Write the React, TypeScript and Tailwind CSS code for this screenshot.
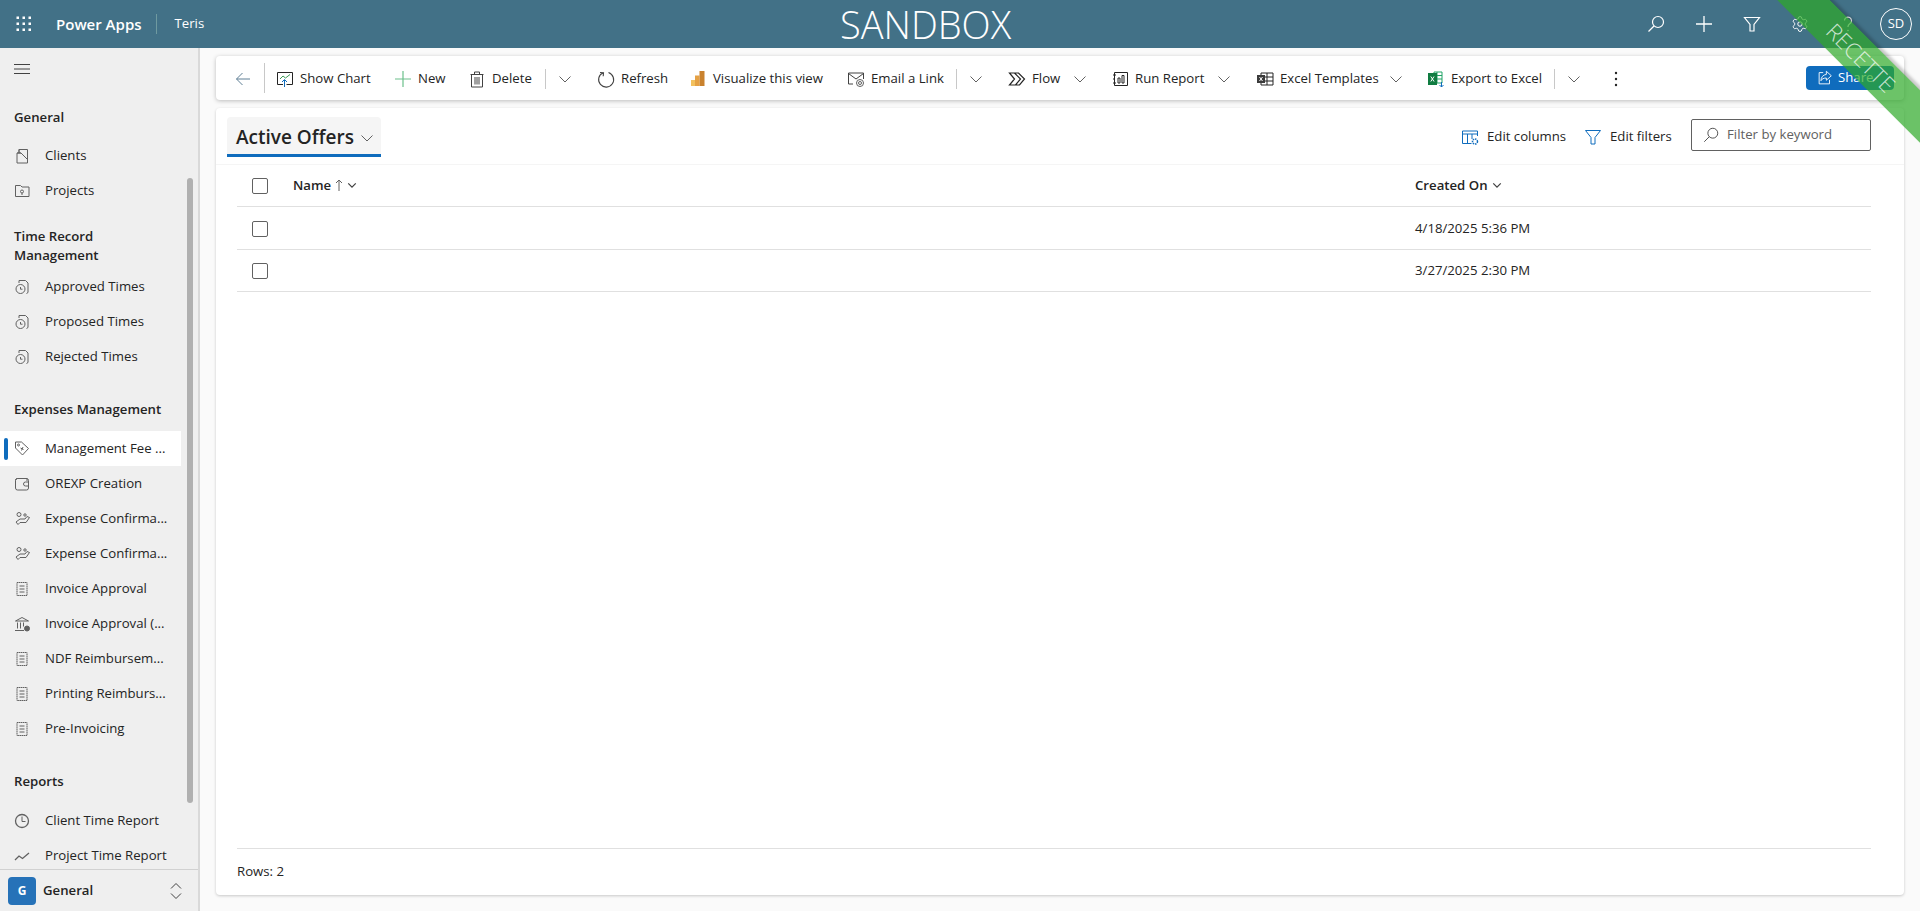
import type { ReactNode } from "react";
import { Settings } from "lucide-react";

function Ico({ children, size = 20, className = "" }: { children: ReactNode; size?: number; className?: string }) {
  return (
    <svg
      width={size}
      height={size}
      viewBox="0 0 20 20"
      fill="none"
      stroke="currentColor"
      strokeWidth="1"
      className={`shrink-0 ${className}`}
    >
      {children}
    </svg>
  );
}

function Chevron({ className = "text-[#616161]" }: { className?: string }) {
  return (
    <svg width="12" height="12" viewBox="0 0 12 12" fill="none" stroke="currentColor" className={`shrink-0 ${className}`}>
      <path d="M0.5 3.5 6 9l5.5-5.5" />
    </svg>
  );
}

const DocIcon = () => (
  <Ico>
    <path d="M5 3.500h10v13H5z" strokeDasharray="1.500 0.400" />
    <path d="M7.500 7h5M7.500 10h5M7.500 13h5" />
  </Ico>
);
const TimeDocIcon = () => (
  <Ico>
    <path d="M7 6V3.500h6.500l2.500 2.500v9.500l-1.500 1" />
    <circle cx="8.500" cy="12" r="4.500" />
    <path d="M8.500 10v2.200h2" />
  </Ico>
);
const HandIcon = () => (
  <Ico>
    <circle cx="7" cy="5.500" r="2" />
    <path d="M4 13l4-3h5l2-2.500 2.500 1-3.500 5h-6l-2 2z" />
    <circle cx="13" cy="6" r="1.200" />
  </Ico>
);

type NavItem = { label: string; icon: ReactNode; active?: boolean };
type Section = { title: ReactNode; className: string; listClass: string; items: NavItem[] };

const sections: Section[] = [
  {
    title: "General",
    className: "pt-[18px]",
    listClass: "mt-[11px]",
    items: [
      {
        label: "Clients",
        icon: (
          <Ico>
            <path d="M5 17V7h2V3.500h8.500V17z" />
            <path d="M7 3.500v3.500h2l6.500 6.500M5 7h4" />
          </Ico>
        ),
      },
      {
        label: "Projects",
        icon: (
          <Ico>
            <path d="M3.500 15.500v-11h5l1.500 1.500h7v9.500z" />
            <circle cx="10" cy="10.500" r="1.500" />
            <path d="M10 12v2" />
          </Ico>
        ),
      },
    ],
  },
  {
    title: (
      <>
        Time Record
        <br />
        Management
      </>
    ),
    className: "pt-[18px]",
    listClass: "mt-[4px]",
    items: [
      { label: "Approved Times", icon: <TimeDocIcon /> },
      { label: "Proposed Times", icon: <TimeDocIcon /> },
      { label: "Rejected Times", icon: <TimeDocIcon /> },
    ],
  },
  {
    title: "Expenses Management",
    className: "pt-[25px]",
    listClass: "mt-[12px]",
    items: [
      {
        label: "Management Fee ...",
        active: true,
        icon: (
          <Ico>
            <path d="M3.500 5V3h6l7 6.500-6 6.500-7-7z" />
            <circle cx="6.500" cy="6" r="1" />
            <path d="M8.500 9l3 1.500M11 8l-1.500 3.500" />
          </Ico>
        ),
      },
      {
        label: "OREXP Creation",
        icon: (
          <Ico>
            <path d="M3.500 6.500a2 2 0 0 1 2-2h9.500v2.500" />
            <rect x="3.500" y="4.500" width="13" height="11.500" rx="2" />
            <path d="M16.500 8h-3a2 2 0 0 0 0 4h3" />
          </Ico>
        ),
      },
      { label: "Expense Confirma...", icon: <HandIcon /> },
      { label: "Expense Confirma...", icon: <HandIcon /> },
      { label: "Invoice Approval", icon: <DocIcon /> },
      {
        label: "Invoice Approval (...",
        icon: (
          <Ico>
            <path d="M3.500 7 10 3.500 16.500 7zM3 16.500h9M5.500 8.500v6M8.500 8.500v6M11.500 8.500v4" />
            <circle cx="15" cy="14.500" r="2.500" fill="currentColor" />
          </Ico>
        ),
      },
      { label: "NDF Reimbursem...", icon: <DocIcon /> },
      { label: "Printing Reimburs...", icon: <DocIcon /> },
      { label: "Pre-Invoicing", icon: <DocIcon /> },
    ],
  },
  {
    title: "Reports",
    className: "pt-[26px]",
    listClass: "mt-[12px]",
    items: [
      {
        label: "Client Time Report",
        icon: (
          <Ico>
            <circle cx="10" cy="10" r="6.500" strokeWidth="1.300" />
            <path d="M10 5.500V10.500h3.500" />
          </Ico>
        ),
      },
      {
        label: "Project Time Report",
        icon: (
          <Ico>
            <path d="M3 14l4-4 3.500 2.500L17 7" strokeWidth="1.300" />
          </Ico>
        ),
      },
    ],
  },
];

function Sidebar() {
  return (
    <aside className="relative flex w-[200px] shrink-0 flex-col border-r-2 border-[#d9d9d9] bg-[#efefef] text-[#242424]">
      <div className="flex h-[42px] shrink-0 items-center pl-[14px]">
        <svg width="16" height="12" viewBox="0 0 16 12" stroke="#424242" strokeWidth="1">
          <path d="M0 1.500h16M0 6h16M0 10.500h16" />
        </svg>
      </div>
      <nav className="flex-1 overflow-hidden">
        {sections.map((section, i) => (
          <div key={i} className={section.className}>
            <div className="pl-[14px] text-[13.200px] leading-[19.500px] font-semibold">{section.title}</div>
            <ul className={section.listClass}>
              {section.items.map((item, j) => (
                <li
                  key={j}
                  className={`relative flex h-[35px] w-[181px] items-center gap-[6px] pl-[12px] text-[13.200px] whitespace-nowrap ${
                    item.active ? "bg-white" : ""
                  }`}
                >
                  {item.active && (
                    <span className="absolute top-[7px] left-[4px] h-[22px] w-[4px] rounded-sm bg-[#0f6cbd]" />
                  )}
                  <span className="flex w-[27px] text-[#616161]">{item.icon}</span>
                  {item.label}
                </li>
              ))}
            </ul>
          </div>
        ))}
      </nav>
      <div className="absolute top-[130px] left-[187px] h-[625px] w-[6px] rounded-full bg-[#b0b0b0]" />
      <div className="flex h-[42px] shrink-0 items-center border-t border-[#d1d1d1] pr-[16px] pl-[8px]">
        <span className="flex h-[28px] w-[28px] items-center justify-center rounded-[4px] bg-[#2672b8] text-[12px] font-bold text-white">
          G
        </span>
        <span className="ml-[7px] text-[13.200px] font-semibold">General</span>
        <svg width="12" height="18" viewBox="0 0 12 18" fill="none" stroke="#424242" className="ml-auto">
          <path d="M1 6.500 6 1.500l5 5M1 11.500l5 5 5-5" />
        </svg>
      </div>
    </aside>
  );
}

function ToolItem({
  icon,
  label,
  width,
  chevron,
  className = "",
}: {
  icon: ReactNode;
  label: string;
  width: string;
  chevron?: boolean;
  className?: string;
}) {
  return (
    <button className={`flex h-full shrink-0 items-center gap-[5px] pl-[10px] whitespace-nowrap ${width} ${className}`}>
      {icon}
      {label}
      {chevron && <Chevron className="ml-auto text-[#616161]" />}
    </button>
  );
}

const Divider = () => <span className="h-[20px] w-px shrink-0 bg-[#c8c8c8]" />;
const ChevronBtn = () => (
  <button className="flex h-full w-[37px] shrink-0 items-center justify-center">
    <Chevron />
  </button>
);

function CommandBar() {
  return (
    <div className="flex h-[44px] shrink-0 items-center rounded-[4px] bg-white pt-[2px] text-[13.200px] text-[#242424] shadow-[0_1px_4px_rgba(0,0,0,0.25)]">
      <button className="flex h-full w-[48px] shrink-0 items-center pl-[17px] text-[#5f7f95]">
        <Ico>
          <path d="M17 10H3.500M9.500 4l-6 6 6 6" />
        </Ico>
      </button>
      <span className="mb-[2px] h-[30px] w-px shrink-0 bg-[#c8c8c8]" />
      <ToolItem
        width="w-[118px]"
        label="Show Chart"
        icon={
          <Ico>
            <path d="M8 15.500H2.500v-12h15v12h-6" />
            <path d="M5 10l3-3 2.500 2L15 5.500" stroke="#3a9a55" />
            <path d="M9.500 18v-7M7 13l2.500-2.500L12 13" stroke="#0f6cbd" />
          </Ico>
        }
      />
      <ToolItem
        width="w-[74px]"
        label="New"
        icon={
          <Ico className="text-[#6cc08b]">
            <path d="M10 2v16M2 10h16" strokeWidth="1.200" />
          </Ico>
        }
      />
      <ToolItem
        width="w-[88px]"
        label="Delete"
        icon={
          <Ico className="text-[#424242]">
            <path d="M3.500 5.500h13M7.500 5.500V3h5v2.500M4.500 5.500V18h11V5.500M8 8v7.500M10 8v7.500M12 8v7.500" />
          </Ico>
        }
      />
      <Divider />
      <ChevronBtn />
      <ToolItem
        className="ml-[3px]"
        width="w-[92px]"
        label="Refresh"
        icon={
          <Ico className="text-[#424242]">
            <path d="M7 3.800A7.500 7.500 0 1 0 12.500 3.500M4 3.500l3.500.3L7.200 7.200" strokeWidth="1.100" />
          </Ico>
        }
      />
      <ToolItem
        width="w-[158px]"
        label="Visualize this view"
        icon={
          <svg width="20" height="20" viewBox="0 0 20 20" className="shrink-0">
            <rect x="3" y="11" width="4" height="6" fill="#f2c15f" />
            <rect x="7" y="6.500" width="4.500" height="10.500" fill="#e5a144" />
            <rect x="11.500" y="2" width="5" height="15" fill="#c9822e" />
          </svg>
        }
      />
      <ToolItem
        width="w-[120px]"
        label="Email a Link"
        icon={
          <Ico className="text-[#424242]">
            <path d="M7 15H2.500V4h15v6M2.500 4.500 10 10l7.500-5.500" />
            <circle cx="14" cy="14" r="3.500" stroke="#616161" />
            <circle cx="14" cy="14" r="1.500" stroke="#616161" />
          </Ico>
        }
      />
      <Divider />
      <ChevronBtn />
      <ToolItem
        className="ml-[3px] pr-[14px]"
        width="w-[103px]"
        label="Flow"
        chevron
        icon={
          <Ico className="text-[#242424]">
            <path d="M2.500 4h9l6 6-5 6h-10l5-6zM7.500 4l6 6-5 6" strokeWidth="1.200" />
          </Ico>
        }
      />
      <ToolItem
        className="pr-[15px]"
        width="w-[145px]"
        label="Run Report"
        chevron
        icon={
          <Ico className="text-[#242424]">
            <path d="M4.500 3.500h13v13h-13z" />
            <path d="M8 9h2v5H8zM12 6.500h2V14h-2z" />
            <path d="M3 6h3M3 14h3M3 10h2" />
          </Ico>
        }
      />
      <ToolItem
        className="pr-[14px]"
        width="w-[171px]"
        label="Excel Templates"
        chevron
        icon={
          <svg width="20" height="20" viewBox="0 0 20 20" fill="none" stroke="#242424" className="shrink-0">
            <path d="M6 4h12v12H6zM12 4v12M6 8h12M6 12h12" />
            <rect x="2" y="6" width="8" height="8" fill="#3b3b3b" stroke="none" />
            <path d="M4.500 8l3 4M7.500 8l-3 4" stroke="#fff" />
          </svg>
        }
      />
      <ToolItem
        width="w-[138px]"
        label="Export to Excel"
        icon={
          <svg width="20" height="20" viewBox="0 0 20 20" fill="none" className="shrink-0">
            <path d="M8 3h8v11H8z" fill="#fff" stroke="#21a366" />
            <path d="M11 3v11M8 6.500h8M8 10h8" stroke="#21a366" />
            <rect x="2" y="4" width="9" height="12" fill="#107c41" />
            <path d="M4.800 7.500l3.200 5M8 7.500l-3.200 5" stroke="#fff" />
            <path d="M15.500 13v5M13.500 16l2 2 2-2" stroke="#0f6cbd" />
          </svg>
        }
      />
      <Divider />
      <ChevronBtn />
      <button className="flex h-full w-[48px] shrink-0 items-center justify-center">
        <svg width="4" height="16" viewBox="0 0 4 16" fill="#242424">
          <circle cx="2" cy="2" r="1.200" />
          <circle cx="2" cy="8" r="1.200" />
          <circle cx="2" cy="14" r="1.200" />
        </svg>
      </button>
      <button className="mr-[10px] mb-[2px] ml-auto flex h-[24px] w-[88px] items-center gap-[4px] rounded-[4px] bg-[#0f6cbd] pl-[10px] text-white">
        <Ico size={18}>
          <path d="M8 4H3.500v12.500H15V12" />
          <path d="M11.500 2.500 17 7.500l-5.500 5V10C8.500 10 6.500 11 5.500 13c0-4 2.500-6.500 6-7z" />
        </Ico>
        Share
      </button>
    </div>
  );
}

function Checkbox() {
  return <span className="block h-[16px] w-[16px] rounded-[2px] border border-[#616161] bg-white" />;
}

const rows = [
  { created: "4/18/2025 5:36 PM", className: "h-[43px]" },
  { created: "3/27/2025 2:30 PM", className: "h-[42px]" },
];

function OffersGrid() {
  return (
    <section className="flex min-h-0 flex-1 flex-col rounded-[4px] bg-white text-[13.200px] text-[#242424] shadow-[0_1px_3px_rgba(0,0,0,0.2)]">
      <div className="flex h-[57px] shrink-0 items-start border-b border-[#f5f5f5] pr-[33px] pl-[11px]">
        <button className="mt-[9px] flex h-[40px] w-[154px] items-center gap-[7px] rounded-t-[4px] border-b-[3px] border-[#0f6cbd] bg-[#f5f5f5] pt-[4px] pl-[9px] text-[19px] font-semibold">
          Active Offers
          <Chevron />
        </button>
        <div className="mt-[11px] ml-auto flex h-[32px] items-center">
          <button className="flex w-[123px] items-center gap-[7px] pt-[3px] whitespace-nowrap">
            <Ico className="text-[#0f6cbd]">
              <path d="M2.500 4h15v5M2.500 4v12.500h9M2.500 7h15M7.500 7v9.500M12 7v5" />
              <circle cx="15" cy="14.500" r="2.500" strokeWidth="1.500" strokeDasharray="1.500 0.800" />
            </Ico>
            Edit columns
          </button>
          <button className="flex w-[108px] items-center gap-[7px] pt-[3px] whitespace-nowrap">
            <Ico className="text-[#0f6cbd]">
              <path d="M2.500 3.500h15l-5.500 7v6.500H8v-6.500z" />
            </Ico>
            Edit filters
          </button>
          <div className="flex h-[32px] w-[180px] items-center gap-[7px] rounded-[2px] border border-[#616161] pl-[10px] text-[#616161]">
            <Ico size={18} className="text-[#424242]">
              <circle cx="12" cy="8" r="5.500" />
              <path d="M8 12 2.500 17.500" />
            </Ico>
            Filter by keyword
          </div>
        </div>
      </div>
      <div className="mr-[33px] ml-[21px] flex min-h-0 flex-1 flex-col">
        <div className="grid h-[42px] shrink-0 grid-cols-[56px_1122px_1fr] items-center border-b border-[#e0e0e0] font-semibold">
          <div className="pl-[15px]">
            <Checkbox />
          </div>
          <div className="flex items-center gap-[4px]">
            Name
            <svg width="8" height="12" viewBox="0 0 8 12" fill="none" stroke="#616161">
              <path d="M4 12V1M1 4l3-3 3 3" />
            </svg>
            <svg width="10" height="10" viewBox="0 0 12 12" fill="none" stroke="#424242" strokeWidth="1.500">
              <path d="M1.500 4 6 8.500 10.500 4" />
            </svg>
          </div>
          <div className="flex items-center gap-[4px]">
            Created On
            <svg width="10" height="10" viewBox="0 0 12 12" fill="none" stroke="#424242" strokeWidth="1.500">
              <path d="M1.500 4 6 8.500 10.500 4" />
            </svg>
          </div>
        </div>
        {rows.map((row) => (
          <div
            key={row.created}
            className={`grid shrink-0 grid-cols-[56px_1122px_1fr] items-center border-b border-[#e0e0e0] pt-[1px] ${row.className}`}
          >
            <div className="pl-[15px]">
              <Checkbox />
            </div>
            <div />
            <div>{row.created}</div>
          </div>
        ))}
        <div className="mt-auto flex h-[47px] shrink-0 items-center border-t border-[#e0e0e0]">Rows: 2</div>
      </div>
    </section>
  );
}

function TopBar() {
  return (
    <header className="relative flex h-[48px] shrink-0 items-center bg-[#427187] text-white">
      <div className="flex w-[48px] justify-center">
        <svg width="16" height="16" viewBox="0 0 16 16" fill="#fff">
          {[1, 7, 13].map((y) =>
            [1, 7, 13].map((x) => <rect key={`${x}-${y}`} x={x - 0.5} y={y - 0.5} width="2.500" height="2.500" />),
          )}
        </svg>
      </div>
      <span className="ml-[8px] text-[15px] font-semibold">Power Apps</span>
      <span className="ml-[14px] h-[20px] w-px bg-[#6f9aa0]" />
      <span className="ml-[18px] text-[13.200px]">Teris</span>
      <span className="absolute top-0 left-[840px] text-[38px] leading-[48px] font-light">SANDBOX</span>
      <div className="ml-auto flex items-center pr-[8px]">
        <span className="flex w-[48px] justify-center">
          <Ico>
            <circle cx="12" cy="8" r="5.500" strokeWidth="1.200" />
            <path d="M8 12 2.500 17.500" strokeWidth="1.200" />
          </Ico>
        </span>
        <span className="flex w-[48px] justify-center">
          <Ico>
            <path d="M10 2v16M2 10h16" strokeWidth="1.300" />
          </Ico>
        </span>
        <span className="flex w-[48px] justify-center">
          <Ico>
            <path d="M2.500 3.500h15l-5.500 7v6.500H8v-6.500z" strokeWidth="1.200" />
          </Ico>
        </span>
        <span className="flex w-[48px] justify-center">
          <Settings size={18} strokeWidth={1.300} />
        </span>
        <span className="flex w-[48px] justify-center">
          <Ico>
            <path d="M6.500 6.500a3.500 3.500 0 1 1 5.500 3c-1.500 1-2 1.500-2 3v.5" strokeWidth="1.200" />
            <circle cx="10" cy="16.500" r="0.800" fill="currentColor" stroke="none" />
          </Ico>
        </span>
        <span className="ml-[8px] flex h-[32px] w-[32px] items-center justify-center rounded-full border border-white text-[13px]">
          SD
        </span>
      </div>
    </header>
  );
}

export default function App() {
  return (
    <div className="relative flex h-screen flex-col overflow-hidden bg-[#fafafa] font-['Open_Sans','Noto_Sans',sans-serif]">
      <TopBar />
      <div className="flex min-h-0 flex-1">
        <Sidebar />
        <main className="flex min-w-0 flex-1 flex-col gap-[8px] pt-[8px] pr-[16px] pb-[16px] pl-[16px]">
          <CommandBar />
          <OffersGrid />
        </main>
      </div>
      <div className="pointer-events-none absolute top-0 right-0 h-[200px] w-[200px] overflow-hidden">
        <div className="absolute top-[39px] left-[-9px] flex h-[37px] w-[300px] rotate-45 items-center justify-center bg-[#2da928b3] text-[22px] font-light text-[#ffffffc0] shadow-[0_-3px_3px_rgba(0,0,0,0.2)]">
          RECETTE
        </div>
      </div>
    </div>
  );
}
